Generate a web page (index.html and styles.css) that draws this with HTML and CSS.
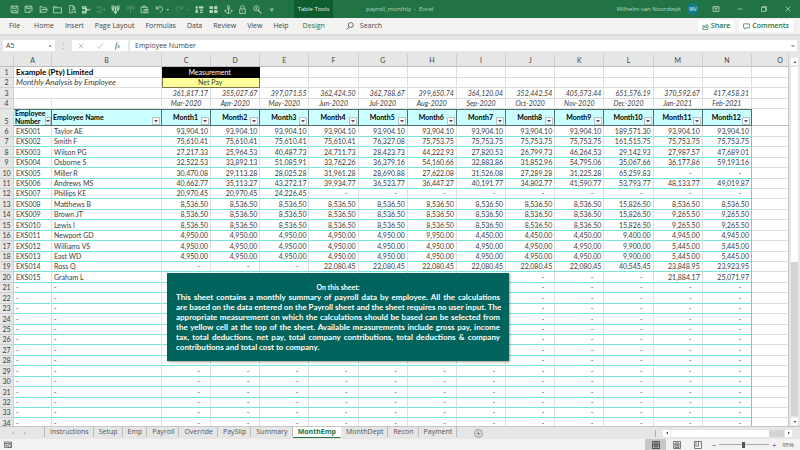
FILE: index.html
```html
<!DOCTYPE html>
<html lang="en">
<head>
<meta charset="utf-8">
<title>payroll_monthly - Excel</title>
<link rel="stylesheet" href="styles.css">
</head>
<body>
<div class="app">
  <header class="titlebar">
    <div class="quick">
      <button aria-label="Save"><svg viewBox="0 0 16 16"><path d="M2 2h12v12H3l-1-1zM5 2v4h6V2M5 14v-4h6v4"/></svg></button>
      <button aria-label="Save as"><svg viewBox="0 0 16 16"><path d="M14 7V2H2v11h5M5 2v4h6V2M8 14l1-3 5-5 2 2-5 5z"/></svg></button>
      <button aria-label="Open"><svg viewBox="0 0 16 16"><path d="M2 13V3h4l1 2h6v3M2 13l3-5h10l-3 5z"/></svg></button>
      <button aria-label="Close file"><svg viewBox="0 0 16 16"><path d="M1 3h5l2 2h7v9H1zM1 5h7"/></svg></button>
      <button aria-label="Print preview"><svg viewBox="0 0 16 16"><path d="M8 14H3V1h6l3 3v4M9 1v4h3"/><circle cx="10" cy="10" r="3"/><path d="M12 12l3 3"/></svg></button>
      <button aria-label="Insert row"><svg viewBox="0 0 16 16"><path d="M1 3h6v3H1zM1 11h6v3H1zM6 8.500h9M9 6L6 8.500l3 2.500" stroke-width="2"/></svg></button>
      <button aria-label="Delete row" class="dim"><svg viewBox="0 0 16 16"><path d="M1 3h6v2H1zM1 11h6v2H1zM6 8h9M12 5l3 3-3 3"/></svg></button>
      <button aria-label="Insert column"><svg viewBox="0 0 16 16"><path d="M2 1v6h3V1M11 1v6h3V1M8 2v13M5 11l3 4 3-4M2 9h3M11 9h3" stroke-width="2"/></svg></button>
      <button aria-label="Delete column" class="dim"><svg viewBox="0 0 16 16"><path d="M2 1v6h3V1M11 1v6h3V1M8 2v13M5 5l3-3 3 3"/></svg></button>
      <button aria-label="Paste"><svg viewBox="0 0 16 16"><path d="M6 14H2V4h11v3M5 4V2h5v2M7 8h7v6H7zM9 10h3M9 12h3"/></svg></button>
      <button aria-label="Undo"><svg class="wide" viewBox="0 0 26 16"><path d="M2 2v5h5M2 7c4-6 12-5 11 1-.5 3-3 5-5 6" stroke-width="1.600"/><path d="M20 7h5l-2.500 3z" class="solid"/></svg></button>
      <button aria-label="Redo" class="dim"><svg class="wide" viewBox="0 0 26 16"><path d="M13 2v5H8M13 7C9 1 1 2 2 8c.5 3 3 5 5 6" stroke-width="1.600"/><path d="M20 7h5l-2.500 3z" class="solid"/></svg></button>
      <button aria-label="Freeze panes"><svg viewBox="0 0 16 16"><path d="M1 2h4v4H1zM7 2h8v4H7zM1 8h4v6H1zM9 8h5v2H9zM9 12h5v2H9z" class="solid"/></svg></button>
      <button aria-label="Split"><svg viewBox="0 0 16 16"><path d="M1 2h6v5H1zM9 2h6v5H9zM1 9h6v5H1zM9 9h6v5H9z" class="solid"/></svg></button>
      <button aria-label="Anchor"><svg viewBox="0 0 16 16"><circle cx="8" cy="3" r="2"/><path d="M8 5v10M5 7h6M2 9c0 4 3 5 6 6 3-1 6-2 6-6M1 11l1-2 2 1M15 11l-1-2-2 1"/></svg></button>
      <button aria-label="Protect"><svg viewBox="0 0 16 16"><path d="M3 7h10v8H3zM5 7V4c0-4 6-4 6 0v3M8 10v2"/></svg></button>
      <button aria-label="Find"><svg viewBox="0 0 16 16"><circle cx="6" cy="6" r="4.500"/><path d="M9 9l6 6M6 4v4" stroke-width="2"/></svg></button>
      <button aria-label="More commands"><svg viewBox="0 0 16 16"><path d="M5 7h7M7 9h3l-1.500 2z"/></svg></button>
    </div>
    <div class="context">Table Tools</div>
    <div class="doc">payroll_monthly&nbsp; - &nbsp;Excel</div>
    <div class="user">Wilhelm van Noordwyk <span class="avatar">WV</span></div>
    <div class="window">
      <button aria-label="Ribbon display"><svg viewBox="0 0 16 16"><path d="M2 3h12v10H2zM2 6h12M8 12V7M6 9l2-2 2 2"/></svg></button>
      <button aria-label="Minimize"><svg viewBox="0 0 16 16"><path d="M3 8h10"/></svg></button>
      <button aria-label="Restore"><svg viewBox="0 0 16 16"><path d="M3 5h8v8H3zM5 5V3h8v8h-2"/></svg></button>
      <button aria-label="Close"><svg viewBox="0 0 16 16"><path d="M3 3l10 10M13 3L3 13"/></svg></button>
    </div>
  </header>

  <nav class="ribbon">
    <a href="#" class="file">File</a><a href="#">Home</a><a href="#">Insert</a><a href="#">Page Layout</a><a href="#">Formulas</a><a href="#">Data</a><a href="#">Review</a><a href="#">View</a><a href="#" class="help">Help</a><a href="#" class="design">Design</a>
    <a href="#" class="search"><svg viewBox="0 0 16 16"><circle cx="9.500" cy="6" r="5"/><path d="M6 10l-5 5"/></svg>Search</a>
    <div class="actions">
      <button><svg viewBox="0 0 16 16"><path d="M5 6H2v9h11v-4M4 11c1-4 4-5 7-5V3l4 4.500-4 4V9c-3 0-5 0-7 2z"/></svg>Share</button>
      <button><svg viewBox="0 0 16 16"><path d="M1 2h14v9H7l-3 3v-3H1z"/></svg>Comments</button>
    </div>
  </nav>

  <div class="formula">
    <div class="namebox"><input aria-label="Name box" value="A5"><svg viewBox="0 0 8 8"><path d="M1 3h6L4 6z"/></svg></div>
    <span class="grip">⋮</span>
    <div class="fx">
      <svg viewBox="0 0 16 16"><path d="M3 3l10 10M13 3L3 13"/></svg>
      <svg viewBox="0 0 16 16"><path d="M2 9l4 4 8-10"/></svg>
      <i>f<small>x</small></i>
    </div>
    <div class="content"><input aria-label="Formula" value="Employee Number"><svg viewBox="0 0 8 8"><path d="M1 2l3 3 3-3" class="line"/></svg></div>
  </div>

  <main class="workspace">
    <div class="sheet">
      <table>
        <colgroup><col class="c-num"><col class="c-a"><col class="c-b"><col><col><col><col><col><col><col><col><col><col><col><col><col class="c-o"></colgroup>
        <thead></thead>
        <tbody></tbody>
      </table>
      <aside class="note">
        <h2>On this sheet:</h2>
        <p>
          <span>This sheet contains a monthly summary of payroll data by employee. All the calculations</span>
          <span>are based on the data entered on the Payroll sheet and the sheet requires no user input. The</span>
          <span>appropriate measurement on which the calculations should be based can be selected from</span>
          <span>the yellow cell at the top of the sheet. Available measurements include gross pay, income</span>
          <span>tax, total deductions, net pay, total company contributions, total deductions &amp; company</span>
          <span>contributions and total cost to company.</span>
        </p>
      </aside>
    </div>
    <div class="vscroll">
      <button aria-label="Scroll up"><svg viewBox="0 0 8 8"><path d="M1 6h6L4 2z"/></svg></button>
      <div class="track"><div class="thumb"></div></div>
      <button aria-label="Scroll down"><svg viewBox="0 0 8 8"><path d="M1 2h6L4 6z"/></svg></button>
    </div>
  </main>

  <div class="tabbar">
    <div class="tabnav"><button aria-label="Previous sheets"><svg viewBox="0 0 8 8"><path d="M6 1v6L2 4z"/></svg></button><button aria-label="Next sheets"><svg viewBox="0 0 8 8"><path d="M2 1v6l4-3z"/></svg></button></div>
    <div class="tabs">
      <button>Instructions</button><button>Setup</button><button>Emp</button><button>Payroll</button><button>Override</button><button>PaySlip</button><button>Summary</button><button class="active">MonthEmp</button><button>MonthDept</button><button>Recon</button><button>Payment</button>
    </div>
    <button class="add" aria-label="New sheet"><svg viewBox="0 0 16 16"><circle cx="8" cy="8" r="7"/><path d="M8 4v8M4 8h8"/></svg></button>
    <div class="hscroll">
      <span class="split"></span>
      <button aria-label="Scroll left"><svg viewBox="0 0 8 8"><path d="M6 1v6L2 4z"/></svg></button>
      <div class="htrack"><div class="hthumb"></div></div>
      <button aria-label="Scroll right"><svg viewBox="0 0 8 8"><path d="M2 1v6l4-3z"/></svg></button>
    </div>
  </div>

  <footer class="status">
    <svg class="macro" viewBox="0 0 16 16"><path d="M1 2h14v11H1zM1 5h14M3 8h4M3 10h4"/><circle cx="11" cy="10" r="3"/></svg>
    <div class="views">
      <button class="on" aria-label="Normal"><svg viewBox="0 0 16 16"><path d="M1 1h14v14H1zM1 6h14M1 10h14M6 1v14M10 1v14"/></svg></button>
      <button aria-label="Page layout"><svg viewBox="0 0 16 16"><path d="M1 1h14v14H1zM4 4h8v9H4zM5 6h6M5 8h6M5 10h6"/></svg></button>
      <button aria-label="Page break preview"><svg viewBox="0 0 16 16"><path d="M1 1h14v14H1zM1 10h8V1M4 2v6"/></svg></button>
    </div>
    <div class="zoom"><button aria-label="Zoom out">−</button><input type="range" min="10" max="190" value="97" aria-label="Zoom"><button aria-label="Zoom in">+</button><span>95%</span></div>
  </footer>
</div>
<script src="sheet.js"></script>
</body>
</html>
```
FILE: styles.css
```css
* { box-sizing: border-box; }
body { margin: 0; font: 7px/10px "Open Sans", "Noto Sans", sans-serif; color: #444; background: #e6e6e6; }
button { margin: 0; padding: 0; border: 0; background: none; font: inherit; color: inherit; display: flex; align-items: center; justify-content: center; }
input { margin: 0; border: 0; padding: 0; background: none; font: inherit; color: inherit; min-width: 0; }
a { color: inherit; text-decoration: none; }
svg { display: block; width: 8px; height: 8px; fill: none; stroke: currentColor; stroke-width: 1.5; flex: none; }
.solid { fill: currentColor; stroke: none; }

.app { display: flex; flex-direction: column; height: 100vh; overflow: hidden; }

/* Title bar */
.titlebar { display: flex; align-items: center; flex: none; height: 18px; background: #217346; color: #b4d6c2; font-size: 6px; }
.quick { display: grid; grid-template-columns: repeat(10, 29fr) repeat(2, 40fr) repeat(6, 29fr); width: 272px; margin-left: 7px; margin-right: 15px; }
.quick svg { width: 9px; height: 9px; }
.quick .wide { width: 15px; }
.quick .dim { opacity: .3; }
.context { align-self: stretch; display: flex; align-items: center; justify-content: center; width: 39px; margin-right: 33px; background: #0e5c2f; color: #e6f2ea; white-space: nowrap; }
.doc { flex: 1; white-space: nowrap; }
.user { display: flex; align-items: center; gap: 6px; margin-right: 13px; white-space: nowrap; }
.avatar { width: 12px; height: 12px; border-radius: 50%; background: #0f7c8c; color: #fff; font-size: 5px; line-height: 12px; text-align: center; }
.window { display: flex; gap: 16px; margin-right: 8px; }

/* Ribbon tabs */
.ribbon { display: flex; align-items: center; gap: 11px; flex: none; height: 16px; padding: 0 7px 0 9px; background: #f3f2f1; white-space: nowrap; }
.ribbon .file, .ribbon .help { margin-right: 3px; }
.design { color: #217346; }
.search { display: flex; align-items: center; gap: 6px; margin-left: 10px; }
.actions { display: flex; gap: 5px; margin-left: auto; color: #217346; font-weight: 600; }
.actions button { gap: 2px; height: 12px; padding: 0 4px; background: #fff; border-radius: 1px; }
.actions svg { width: 7px; height: 7px; }

/* Formula bar */
.formula { display: flex; align-items: center; flex: none; padding: 6px 3px 3px; background: linear-gradient(#d9d9d9, #e6e6e6 4px); }
.namebox, .fx, .content { display: flex; align-items: center; height: 11px; background: #fff; }
.namebox { width: 52px; padding: 0 3px; }
.namebox input, .content input { flex: 1; }
.namebox svg, .content svg { width: 4px; height: 4px; fill: #555; stroke: none; }
.content .line { fill: none; stroke: #555; stroke-width: 2; }
.grip { width: 17px; text-align: center; color: #999; }
.fx { width: 56px; gap: 11px; padding-left: 5px; color: #aaa; }
.fx i { color: #444; font: italic 8px/10px "Liberation Serif", serif; }
.fx small { font-size: 6px; }
.content { flex: 1; margin-left: 2px; padding: 0 2px 0 5px; }

/* Worksheet */
.workspace { display: flex; flex: 1; min-height: 0; }
.sheet { position: relative; flex: 1; min-width: 0; overflow: hidden; background: #fff; font-family: Lato, "Open Sans", sans-serif; color: #3c3c3c; }
table { width: 100%; table-layout: fixed; border-collapse: separate; border-spacing: 0; }
.c-num { width: 14px; }
.c-a { width: 38px; }
.c-b { width: 110px; }
.c-o { width: 37px; }
th, td { height: 10px; padding: 0; border-right: 1px solid #dedede; border-bottom: 1px solid #dedede; line-height: 9px; font-weight: 400; white-space: nowrap; overflow: hidden; }
thead th { height: 13px; background: #e6e6e6; border-right-color: #cfcfcf; border-bottom-color: #bdbdbd; color: #444; line-height: 12px; }
thead th:last-child { padding-left: 20px; }
tbody th { background: #e6e6e6; border-color: #d0d0d0; text-align: center; }
tbody tr:nth-child(7n+1) > *, tbody tr:nth-child(7n+3) > *, tbody tr:nth-child(7n+6) > * { height: 11px; line-height: 10px; }
td { text-align: right; padding-right: 2px; }
td.text { text-align: left; padding: 0 0 0 2px; }
td.dash { padding-right: 10px; }
td.title { font-weight: 700; font-size: 8px; color: #000; }
td.sub, td.total, td.period { font-style: italic; }
td.sub { font-size: 8px; }
td.period { text-align: center; padding: 0; }
td.measure { background: #000; color: #fff; text-align: center; border-color: #000; }
td.pick { background: #ffff99; text-align: center; border: 1px solid #77774a; border-top: 0; line-height: 9px; }
tbody tr.fields > * { height: 17px; line-height: 8px; }
tbody tr.fields th { vertical-align: bottom; }
tr.fields td { padding: 0; background: #ccffff; border-color: #4e7272; color: #000; font-weight: 700; border-top: 1px solid #4e7272; }
tr.fields td:last-child { background: #fff; border: 0; border-right: 1px solid #c6c6c6; border-bottom: 1px solid #bdbdbd; }
.field { display: flex; align-items: center; height: 15px; padding-left: 1px; text-align: left; }
.field span { flex: 1; padding-bottom: 2px; }
.field.month span { padding-left: 7px; text-align: center; }
.field button { align-self: flex-end; width: 8px; height: 8px; margin-right: 1px; background: #f8f8f8; border: 1px solid #b5c4c4; color: #555; }
.field svg { width: 4px; height: 4px; fill: currentColor; stroke: none; }
tr.row td:not(:last-child) { border-bottom-color: #79e6da; }
tr.row td:nth-last-child(2) { border-right-color: #5fdccd; }
td:last-child { border-right-color: #c6c6c6; }

.note { position: absolute; left: 167px; top: 219px; width: 342px; height: 88px; padding: 9px; background: #00645c; color: #fff; box-shadow: 1px 1px 2px #0006; font-weight: 700; }
.note h2 { margin: 0; font-size: 7px; line-height: 10px; text-align: center; }
.note p { margin: 0; font-size: 8px; line-height: 10px; }
.note span { display: block; white-space: nowrap; text-align: justify; text-align-last: justify; }
.note span:last-child { text-align-last: left; }

.vscroll { display: flex; flex-direction: column; align-items: center; width: 11px; padding: 4px 0 1px; background: #e6e6e6; }
.vscroll button, .hscroll button { width: 7px; height: 7px; background: #fff; color: #555; }
.vscroll button svg, .hscroll button svg, .tabnav svg { width: 4px; height: 4px; fill: currentColor; stroke: none; }
.track { flex: 1; width: 7px; margin: 2px 0; background: #d4d4d4; }
.thumb { height: 56%; background: #fff; }

/* Sheet tabs */
.tabbar { display: flex; align-items: center; flex: none; height: 13px; background: #e6e6e6; border-top: 1px solid #c6c6c6; color: #555; }
.tabnav { display: flex; gap: 8px; width: 44px; padding-left: 11px; color: #bbb; }
.tabs { display: flex; align-self: stretch; }
.tabs button { height: 10px; padding: 0 4px 0 5px; border-right: 1px solid #bbb; }
.tabs button:first-child { border-left: 1px solid #bbb; }
.tabs .active { height: 11px; background: #fff; color: #217346; font-weight: 700; border-right-color: #fff; border-bottom: 1px solid #217346; }
.add { margin-left: 17px; }
.add svg { width: 9px; height: 9px; stroke-width: 1; }
.hscroll { display: flex; align-items: center; width: 137px; margin: 0 8px 0 auto; }
.split { height: 7px; border-left: 1px solid #aaa; margin-right: 7px; }
.htrack { flex: 1; height: 7px; margin: 0 1px; background: #d4d4d4; }
.hthumb { width: 87%; height: 7px; background: #fff; }

/* Status bar */
.status { display: flex; align-items: center; flex: none; height: 11px; padding-left: 4px; background: #f3f2f1; color: #555; }
.views { display: flex; margin-left: auto; align-self: stretch; }
.views button { width: 21px; }
.views .on { background: #c8c6c4; color: #333; }
.zoom { display: flex; align-items: center; width: 92px; padding: 0 6px 0 2px; font-size: 6px; }
.zoom button { width: 8px; font-size: 8px; line-height: 8px; }
.zoom input { appearance: none; flex: 1; height: 7px; background: linear-gradient(#aaa, #aaa) center / 100% 1px no-repeat; margin: 0 1px; }
.zoom input::-webkit-slider-thumb { appearance: none; width: 3px; height: 6px; background: #555; }
.zoom span { margin-left: 4px; }
```
FILE: sheet.js
```js
const COLUMNS = "ABCDEFGHIJKLMNO".split("");
const TOTALS = "361,817.17 355,027.67 397,071.55 362,424.50 362,788.67 399,650.74 364,120.04 352,442.54 405,573.44 651,576.19 370,592.67 417,458.31".split(" ");
const PERIODS = "Mar-2020 Apr-2020 May-2020 Jun-2020 Jul-2020 Aug-2020 Sep-2020 Oct-2020 Nov-2020 Dec-2020 Jan-2021 Feb-2021".split(" ");
const EMPLOYEES = [
  ["Taylor AE", "93,904.10 93,904.10 93,904.10 93,904.10 93,904.10 93,904.10 93,904.10 93,904.10 93,904.10 189,571.30 93,904.10 93,904.10"],
  ["Smith F", "75,610.41 75,610.41 75,610.41 75,610.41 76,327.08 75,753.75 75,753.75 75,753.75 75,753.75 161,515.75 75,753.75 75,753.75"],
  ["Wilson PG", "27,217.33 25,964.53 40,487.73 24,711.73 28,423.73 44,222.93 27,820.53 26,799.73 46,264.53 29,142.93 27,987.57 47,689.01"],
  ["Osborne S", "32,522.53 33,892.13 51,085.91 33,762.26 36,379.16 54,160.66 32,883.86 31,852.96 54,795.06 35,067.66 36,177.86 59,193.16"],
  ["Miller R", "30,470.08 29,113.28 28,025.28 31,961.28 28,690.88 27,622.08 31,526.08 27,289.28 31,225.28 65,259.83 - -"],
  ["Andrews MS", "40,662.77 35,113.27 43,272.17 39,934.77 36,523.77 36,447.27 40,191.77 34,802.77 41,590.77 53,793.77 48,133.77 49,019.87"],
  ["Phillips KE", "20,970.45 20,970.45 24,226.45 - - - - - - - - -"],
  ["Matthews B", "8,536.50 8,536.50 8,536.50 8,536.50 8,536.50 8,536.50 8,536.50 8,536.50 8,536.50 15,826.50 8,536.50 8,536.50"],
  ["Brown JT", "8,536.50 8,536.50 8,536.50 8,536.50 8,536.50 8,536.50 8,536.50 8,536.50 8,536.50 15,826.50 9,265.50 9,265.50"],
  ["Lewis I", "8,536.50 8,536.50 8,536.50 8,536.50 8,536.50 8,536.50 8,536.50 8,536.50 8,536.50 15,826.50 9,265.50 9,265.50"],
  ["Newport GD", "4,950.00 4,950.00 4,950.00 4,950.00 4,950.00 9,950.00 4,450.00 4,450.00 4,450.00 9,400.00 4,945.00 4,945.00"],
  ["Williams VS", "4,950.00 4,950.00 4,950.00 4,950.00 4,950.00 4,950.00 4,950.00 4,950.00 4,950.00 9,900.00 5,445.00 5,445.00"],
  ["East WD", "4,950.00 4,950.00 4,950.00 4,950.00 4,950.00 4,950.00 4,950.00 4,950.00 4,950.00 9,900.00 5,445.00 5,445.00"],
  ["Ross Q", "- - - 22,080.45 22,080.45 22,080.45 22,080.45 22,080.45 22,080.45 40,545.45 23,848.95 23,923.95"],
  ["Graham L", "- - - - - - - - - - 21,884.17 25,071.97"]
];
const LAST_ROW = 34;
// Cells under the note are left empty.
const underNote = (row, month) => row >= 20 && row <= 28 && month < 7;

const cell = (text, cls = "", span = 1) => `<td class="${cls}" colspan="${span}">${text}</td>`;
const blanks = n => cell("").repeat(n);
const field = (label, cls = "") =>
  `<td><div class="field ${cls}"><span>${label}</span><button aria-label="Filter"><svg viewBox="0 0 8 8"><path d="M0 2h8L4 7z"/></svg></button></div></td>`;

const rows = [
  [cell("Example (Pty) Limited", "text title", 2) + cell("Measurement", "measure", 2) + blanks(11)],
  [cell("Monthly Analysis by Employee", "text sub", 2) + cell("Net Pay", "pick", 2) + blanks(11)],
  [cell("", "", 2) + TOTALS.map(t => cell(t, "total")).join("") + blanks(1)],
  [blanks(2) + PERIODS.map(p => cell(p, "period")).join("") + blanks(1)],
  [field("Employee<br>Number") + field("Employee Name") + PERIODS.map((p, i) => field("Month" + (i + 1), "month")).join("") + blanks(1), "fields"]
];
for (let n = rows.length + 1; n <= LAST_ROW; n++) {
  const index = n - 6;
  const employee = EMPLOYEES[index];
  const code = employee ? "EXS" + String(index + 1).padStart(3, "0") : "-";
  const name = employee ? employee[0] : "-";
  const values = employee ? employee[1].split(" ") : PERIODS.map(() => "-");
  rows.push([
    cell(code, "text") + cell(name, "text") +
    values.map((v, m) => cell(underNote(n, m) ? "" : v, v === "-" ? "dash" : "")).join("") + blanks(1), "row"
  ]);
}

document.querySelector("thead").innerHTML =
  "<tr><th></th>" + COLUMNS.map(c => `<th>${c}</th>`).join("") + "</tr>";
document.querySelector("tbody").innerHTML =
  rows.map(([html, cls = ""], i) => `<tr class="${cls}"><th>${i + 1}</th>${html}</tr>`).join("");
```
